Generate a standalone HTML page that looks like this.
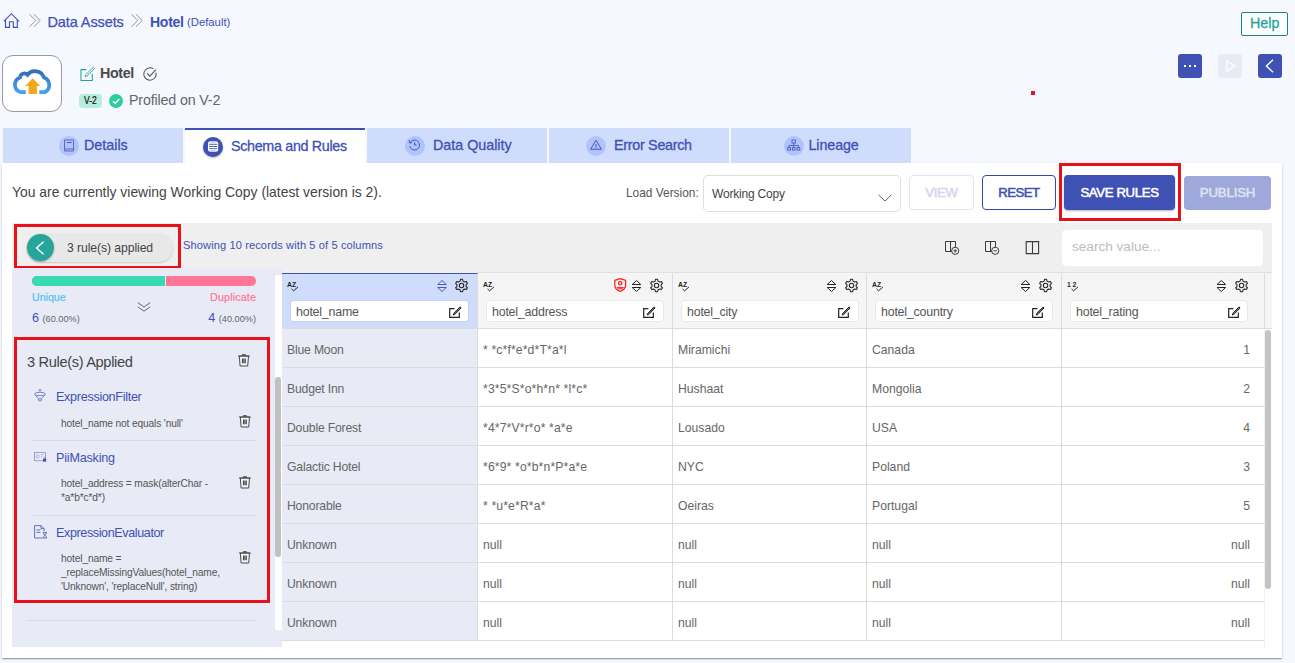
<!DOCTYPE html>
<html lang="en">
<head>
<meta charset="utf-8">
<title>Hotel - Schema and Rules</title>
<style>
*{box-sizing:border-box;margin:0;padding:0}
html,body{width:1295px;height:663px;overflow:hidden}
body{background:#f6f8ff;font-family:"Liberation Sans",Arial,sans-serif;color:#444;position:relative}
.abs{position:absolute}
.t{position:absolute;white-space:nowrap;line-height:1}
svg{position:absolute;overflow:visible}
/* breadcrumb */
.bc{color:#3f51b5;font-size:14.5px;top:15px}
/* tabs */
.tab{position:absolute;z-index:2;top:128px;height:35px;width:180px;background:#d0dcfc}
.tab.on{background:#fff;border-top:2px solid #3f51b5}
.tab .ic{position:absolute;top:8px;width:20px;height:20px;border-radius:50%;background:#b0c3fb}
.tab.on .ic{background:#3f51b5;top:7px;box-shadow:0 1px 2px rgba(0,0,0,.3)}
.tab .lb{position:absolute;top:10px;font-size:14.3px;color:#3f51b5;white-space:nowrap;line-height:1;-webkit-text-stroke:.3px #3f51b5}
.tab.on .lb{top:9px}
/* card */
#card{left:2px;top:163px;width:1280px;height:495px;background:#fff;box-shadow:0 2px 1px -1px rgba(0,0,0,.2),0 1px 1px 0 rgba(0,0,0,.14),0 1px 3px 0 rgba(0,0,0,.12)}
.btn{position:absolute;top:175px;height:35px;border-radius:4px;font-size:13.2px;font-weight:normal;-webkit-text-stroke:.55px currentColor;text-align:center;line-height:33px;white-space:nowrap}
/* table */
.th{position:absolute;top:273px;height:56px;background:#f5f5f5;border-top:1px solid transparent;border-right:1px solid #dcdcdc;border-bottom:1px solid #dcdcdc}
.th.sel{background:#d0dcfc;border-top:1px solid #3f51b5}
.th .inp{position:absolute;left:8.7px;top:27.2px;height:20px;background:#fff;border-radius:2.5px;box-shadow:0 0 0 .6px rgba(0,0,0,.09)}
.th .nm{position:absolute;left:14px;top:32px;letter-spacing:-.2px;font-size:12.4px;color:#555;line-height:1;white-space:nowrap}
.cell{position:absolute;height:39px;border-right:1px solid #dcdcdc;border-bottom:1px solid #dcdcdc;font-size:12.2px;color:#666;line-height:43px;padding:0 5px;white-space:nowrap;background:#fff}
.cell.c0{background:#e8eaf6}
.cell.r{text-align:right;padding-right:14px}
/* left panel */
.rn{color:#3f51b5;font-size:12.6px}
.rd{color:#555;font-size:10.2px;letter-spacing:-.14px}
</style>
</head>
<body>
<!-- breadcrumb -->
<svg style="left:3px;top:13px" width="17" height="16" viewBox="0 0 17 16" fill="none" stroke="#3f51b5" stroke-width="1.15" stroke-linejoin="miter" stroke-linecap="butt"><path d="M.8 8.3 L8.4 .7 L16 8.3"/><path d="M2.5 7 V14.4 H6.5 V8.7 H10.3 V14.4 H14.3 V7"/></svg>
<svg style="left:29px;top:14px" width="12" height="13" viewBox="0 0 12 13" fill="none" stroke="#9a9a9a" stroke-width="1"><path d="M.5 .4 L6.8 6.5 L.5 12.6"/><path d="M5 .4 L11.3 6.5 L5 12.6"/></svg>
<span class="t bc" id="bc1" style="left:47.5px;letter-spacing:-.1px;-webkit-text-stroke:.25px #3f51b5">Data Assets</span>
<svg style="left:131px;top:14px" width="12" height="13" viewBox="0 0 12 13" fill="none" stroke="#9a9a9a" stroke-width="1"><path d="M.5 .4 L6.8 6.5 L.5 12.6"/><path d="M5 .4 L11.3 6.5 L5 12.6"/></svg>
<span class="t bc" id="bc2" style="left:150px;font-weight:bold;font-size:14px;letter-spacing:-.25px">Hotel</span>
<span class="t" id="bc3" style="left:187px;top:17px;font-size:11.3px;color:#3f51b5">(Default)</span>

<!-- help -->
<div class="abs" style="left:1241px;top:12px;width:47px;height:24px;border:1px solid #16897b;border-radius:2px;background:#fff"></div>
<span class="t" id="help" style="left:1250px;top:16px;font-size:14.3px;color:#26a69a;-webkit-text-stroke:.3px #26a69a">Help</span>

<!-- logo -->
<div class="abs" style="left:2px;top:55px;width:60px;height:57px;border:1px solid #9a9a9a;border-radius:11px;background:#fff"></div>
<svg style="left:0px;top:50px" width="70" height="68" viewBox="0 0 682 663" fill="none">
<linearGradient id="cg" x1="0" y1="0" x2="0" y2="1"><stop offset="0" stop-color="#2f6fb6"/><stop offset=".45" stop-color="#3d87d6"/><stop offset="1" stop-color="#4a9fec"/></linearGradient>
<path d="M252 410 H198 A75 75 0 0 1 195 268 A42 42 0 0 1 268 243 A92 92 0 0 1 428 268 A78.5 78.5 0 0 1 440 410 H383" stroke="url(#cg)" stroke-width="36"/>
<path d="M318 275 L393 350 H360 V428 H278 V350 H245 Z" fill="#f5a81c"/>
</svg>

<!-- title -->
<svg style="left:80px;top:66px" width="16" height="16" viewBox="0 0 16 16" fill="none" stroke="#2a9d94" stroke-width="1.05" stroke-linejoin="miter"><path d="M6.4 3.6 H1 V14.4 H12.3 V7.8"/><path d="M5.6 8.9 L13.4 1.2 L14.7 2.5 L6.9 10.2 L5.2 10.6 Z" stroke-width=".9"/></svg>
<span class="t" id="ttl" style="left:100px;top:66px;font-size:14.3px;font-weight:bold;color:#4a4a4a;letter-spacing:-.36px">Hotel</span>
<svg style="left:143px;top:67px" width="14" height="14" viewBox="0 0 14 14" fill="none" stroke="#555" stroke-width="1.05"><path d="M13 5.6 A6.2 6.2 0 1 1 10.4 1.9"/><path d="M4 6.4 L6.8 9.2 L13 2.6"/></svg>
<div class="abs" style="left:79px;top:94px;width:23px;height:14px;border-radius:4px;background:#b7ecdf"></div>
<span class="t" id="v2" style="left:84px;top:95.5px;font-size:10.4px;color:#111;display:inline-block;transform:scaleX(.82);transform-origin:left center;-webkit-text-stroke:.2px #111">V-2</span>
<svg style="left:109px;top:94px" width="14" height="14" viewBox="0 0 14 14"><circle cx="7" cy="7" r="7" fill="#2ccf9c"/><path d="M3.9 7.2 L6.2 9.4 L10.3 4.9" fill="none" stroke="#fff" stroke-width="1.5"/></svg>
<span class="t" id="prof" style="left:129px;top:93px;font-size:14.3px;color:#666;letter-spacing:-.17px">Profiled on V-2</span>

<!-- action buttons -->
<div class="abs" style="left:1178px;top:54px;width:24px;height:24px;border-radius:3px;background:#3f51b5"></div>
<div class="abs" style="left:1184px;top:65px;width:2px;height:2px;background:#fff;box-shadow:5px 0 0 #fff,10px 0 0 #fff"></div>
<div class="abs" style="left:1218px;top:54px;width:24px;height:24px;border-radius:3px;background:#e8ebf3"></div>
<svg style="left:1226px;top:60px" width="10" height="12" viewBox="0 0 10 12" fill="none" stroke="#fff" stroke-width="1.2" stroke-linejoin="round"><path d="M.8 .8 L9 6 L.8 11.2 Z"/></svg>
<div class="abs" style="left:1258px;top:54px;width:24px;height:24px;border-radius:3px;background:#3f51b5"></div>
<svg style="left:1265px;top:59px" width="9" height="14" viewBox="0 0 9 14" fill="none" stroke="#fff" stroke-width="1.4"><path d="M8 .8 L1.4 7 L8 13.2"/></svg>
<div class="abs" style="left:1031px;top:91px;width:4px;height:4px;background:#e8121e"></div>

<!-- tabs -->
<div class="tab" style="left:3px"><div class="ic" style="left:56px"></div><span class="lb" id="tb1" style="left:81px">Details</span>
<svg style="left:61px;top:11px" width="10" height="13" viewBox="0 0 10 13" fill="none" stroke="#4656b8" stroke-width="1"><path d="M.5 1 H9.5 V12 H.5 Z" stroke="#5a69c4"/><path d="M.5 10 H9.5" stroke="#5a69c4"/><path d="M3 3.5 H7.6"/></svg></div>
<div class="tab on" style="left:185px"><div class="ic" style="left:18px"></div><span class="lb" id="tb2" style="left:46px;letter-spacing:-.31px">Schema and Rules</span>
<svg style="left:23px;top:11px" width="10" height="11" viewBox="0 0 10 11" fill="#fff" stroke="none"><rect x="0" y=".3" width="10.2" height="10.4" rx="2.6" ry="2"/><path d="M1 3.3 H9.2 M1 5.5 H9.2 M1 7.7 H9.2" stroke="#3f51b5" stroke-width=".9"/><path d="M2.6 1.3 H7.6 M2.6 9.8 H7.6" stroke="#9aa5e0" stroke-width=".6"/></svg></div>
<div class="tab" style="left:367px"><div class="ic" style="left:38px"></div><span class="lb" id="tb3" style="left:66px">Data Quality</span>
<svg style="left:41px;top:11px" width="13" height="12" viewBox="0 0 13 12" fill="none" stroke="#4656b8" stroke-width="1"><path d="M2.4 3.2 A5 5 0 1 1 1.7 7.2"/><path d="M1.3 1.2 V3.8 H3.9"/><path d="M6.6 3.2 V6 H8.6"/></svg></div>
<div class="tab" style="left:549px"><div class="ic" style="left:37px"></div><span class="lb" id="tb4" style="left:65px;letter-spacing:-.27px">Error Search</span>
<svg style="left:41px;top:11px" width="12" height="11" viewBox="0 0 12 11" fill="none" stroke="#4656b8" stroke-width="1" stroke-linejoin="miter"><path d="M6 1.2 L11.4 10.2 H.6 Z"/><path d="M6 5 V8.4" stroke-width="1.1"/></svg></div>
<div class="tab" style="left:731px"><div class="ic" style="left:53px"></div><span class="lb" id="tb5" style="left:77.5px;letter-spacing:-.1px">Lineage</span>
<svg style="left:56px;top:11px" width="14" height="12" viewBox="0 0 14 12" fill="none" stroke="#4656b8" stroke-width=".85"><rect x="5" y="1" width="3.4" height="3"/><path d="M6.7 4 V6.5 M2 9 V6.5 H11.4 V9 M6.7 6.5 V9"/><rect x=".6" y="8.6" width="2.8" height="2.4"/><rect x="5.3" y="8.6" width="2.8" height="2.4"/><rect x="10" y="8.6" width="2.8" height="2.4"/></svg></div>

<!-- card -->
<div class="abs" id="card"></div>
<span class="t" id="viewing" style="left:12px;top:186px;font-size:13.9px;color:#444">You are currently viewing Working Copy (latest version is 2).</span>
<span class="t" id="loadv" style="left:626px;top:188px;font-size:11.9px;color:#555">Load Version:</span>
<div class="abs" style="left:703px;top:175px;width:198px;height:37px;border:1px solid #dedede;border-radius:5px;background:#fff"></div>
<span class="t" id="wc" style="left:712px;top:188px;font-size:12px;color:#444;letter-spacing:-.2px">Working Copy</span>
<svg style="left:878px;top:194px" width="14" height="8" viewBox="0 0 14 8" fill="none" stroke="#666" stroke-width="1"><path d="M.6 .8 L7 7 L13.4 .8"/></svg>
<div class="btn" style="left:909px;width:65px;border:1px solid #e1e4f5;color:#d3d7ef;background:#fff;letter-spacing:-.36px">VIEW</div>
<div class="btn" style="left:982px;width:74px;border:1px solid #3548ab;color:#3f51b5;background:#fff;letter-spacing:-.54px">RESET</div>
<div class="btn" style="left:1064px;width:111px;background:#3f51b5;color:#fff;line-height:35px;box-shadow:0 1px 2px rgba(0,0,0,.3);letter-spacing:-.37px">SAVE RULES</div>
<div class="btn" style="left:1184px;width:87px;top:176px;height:34px;background:#9fa8da;color:#dfe2f4;line-height:33px;letter-spacing:-.15px">PUBLISH</div>
<div class="abs" style="left:1059px;top:163px;width:122px;height:58px;border:3px solid #ea1019"></div>

<!-- toolbar -->
<div class="abs" style="left:12px;top:223px;width:1260px;height:50px;background:#efefef"></div>
<div class="abs" style="left:27px;top:233px;width:146px;height:29px;border-radius:15px;background:#e8e8e8;box-shadow:0 1px 2px rgba(0,0,0,.16)"></div>
<div class="abs" style="left:27px;top:234px;width:27px;height:27px;border-radius:50%;background:#26a69a;box-shadow:0 1px 2px rgba(0,0,0,.3)"></div>
<svg style="left:35px;top:241px" width="10" height="14" viewBox="0 0 10 14" fill="none" stroke="#fff" stroke-width="1.5"><path d="M8.6 .8 L1.6 7 L8.6 13.2"/></svg>
<span class="t" id="pill" style="left:67px;top:242px;font-size:12.2px;color:#444;letter-spacing:-.08px">3 rule(s) applied</span>
<div class="abs" style="left:14px;top:224px;width:167px;height:45px;border:3px solid #ea1019"></div>
<span class="t" id="showing" style="left:183px;top:240px;font-size:11.1px;color:#3f51b5;letter-spacing:.1px">Showing 10 records with 5 of 5 columns</span>
<svg style="left:944px;top:240px" width="16" height="16" viewBox="0 0 16 16" fill="none" stroke="#3a3a3a" stroke-width="1"><path d="M1.5 1.5 H11.5 V11.5 H1.5 Z M6.5 1.5 V11.5"/><circle cx="11.2" cy="10.8" r="3.6" fill="#efefef" stroke-width="1"/><path d="M11.2 9 V12.6 M9.4 10.8 H13" stroke-width=".9"/></svg>
<svg style="left:984px;top:240px" width="16" height="16" viewBox="0 0 16 16" fill="none" stroke="#3a3a3a" stroke-width="1"><path d="M1.5 1.5 H11.5 V11.5 H1.5 Z M6.5 1.5 V11.5"/><circle cx="11.2" cy="10.8" r="3.6" fill="#efefef" stroke-width="1"/><path d="M9.4 10.8 H13" stroke-width=".9"/></svg>
<svg style="left:1025px;top:240px" width="15" height="15" viewBox="0 0 15 15" fill="none" stroke="#3a3a3a" stroke-width="1.1"><path d="M1.2 1.6 H13.6 V13.6 H1.2 Z M7.5 1.6 V13.6"/></svg>
<div class="abs" style="left:1062px;top:230px;width:201px;height:36px;background:#fff;border-radius:4px"></div>
<span class="t" id="srch" style="left:1072px;top:240px;font-size:13.6px;color:#bdbdbd">search value...</span>

<!-- left panel -->
<div class="abs" style="left:12px;top:268px;width:270px;height:379px;background:#e8eaf6"></div>
<div class="abs" style="left:275px;top:275px;width:7px;height:355px;background:#fff"></div>
<div class="abs" style="left:275px;top:377px;width:6px;height:180px;border-radius:3px;background:#c1c1c1"></div>
<div class="abs" style="left:32px;top:276px;width:224px;height:10px;border-radius:5px;background:#ff7597;overflow:hidden"><div style="width:134px;height:10px;background:#38dbb0;border-right:1px solid #e8eaf6"></div></div>
<span class="t" id="uniq" style="left:32px;top:292px;font-size:10.6px;color:#4fc3f7;-webkit-text-stroke:.2px #4fc3f7">Unique</span>
<span class="t" id="dup" style="right:1039px;top:292px;font-size:10.8px;color:#ff7597;letter-spacing:.1px;-webkit-text-stroke:.2px #ff7597">Duplicate</span>
<span class="t" id="u6" style="left:32px;top:312px;font-size:12.6px;color:#3f51b5">6 <span style="font-size:9.2px;color:#666">(60.00%)</span></span>
<span class="t" id="d4" style="right:1039px;top:312px;font-size:12.6px;color:#3f51b5">4 <span style="font-size:9.2px;color:#666">(40.00%)</span></span>
<svg style="left:137px;top:302px" width="14" height="10" viewBox="0 0 14 10" fill="none" stroke="#666" stroke-width="1"><path d="M.8 .6 L7 5 L13.2 .6"/><path d="M.8 4.8 L7 9.2 L13.2 4.8"/></svg>

<div class="abs" style="left:14px;top:337px;width:256px;height:266px;border:3px solid #ea1019"></div>
<span class="t" id="rapp" style="left:27px;top:355px;font-size:14.6px;color:#444;letter-spacing:-.33px">3 Rule(s) Applied</span>
<svg style="left:238px;top:354px" width="12" height="13" viewBox="0 0 12 13" fill="none" stroke="#4a4a4a" stroke-width="1"><path d="M1.3 2 L2.1 12 H9.7 L10.5 2 Z" fill="#f3f3fb"/><path d="M0 2 H11.8"/><path d="M4 .9 H7.8" stroke-width="1.4"/><path d="M4.5 4.6 V9.2 M5.9 4.6 V9.2 M7.3 4.6 V9.2" stroke-width="1.1"/></svg>

<!-- rule 1 -->
<svg style="left:34px;top:389px" width="12" height="13" viewBox="0 0 12 13" fill="none" stroke="#6b7acb" stroke-width=".9"><circle cx="6" cy="1.3" r=".9"/><ellipse cx="6" cy="5" rx="5.4" ry="1.7"/><path d="M.7 5.4 L4.6 9.6 V11.6 Q6 12.8 7.4 11.6 V9.6 L11.3 5.4"/><path d="M4.6 9.8 H7.4"/></svg>
<span class="t rn" id="r1" style="left:56px;top:391px;letter-spacing:-.3px">ExpressionFilter</span>
<span class="t rd" id="r1d" style="left:61px;top:418.5px">hotel_name not equals 'null'</span>
<svg style="left:239px;top:415px" width="12" height="13" viewBox="0 0 12 13" fill="none" stroke="#4a4a4a" stroke-width="1"><path d="M1.3 2 L2.1 12 H9.7 L10.5 2 Z" fill="#f3f3fb"/><path d="M0 2 H11.8"/><path d="M4 .9 H7.8" stroke-width="1.4"/><path d="M4.5 4.6 V9.2 M5.9 4.6 V9.2 M7.3 4.6 V9.2" stroke-width="1.1"/></svg>
<div class="abs" style="left:32px;top:440px;width:224px;height:1px;background:#d9dbe6"></div>
<!-- rule 2 -->
<svg style="left:34px;top:452px" width="13" height="10" viewBox="0 0 13 10" fill="none" stroke="#8f9ad8" stroke-width=".9"><rect x=".5" y=".5" width="11" height="8.2"/><circle cx="3.6" cy="4.4" r="1.5" stroke-width=".7"/><path d="M7 2.6 H9.4 M7 4.4 H8.4" stroke-width=".7"/><rect x="9" y="6.8" width="3.2" height="2.8" fill="#3f51b5" stroke="none"/><path d="M9.8 6.8 V6 Q10.6 5.2 11.4 6 V6.8" stroke="#3f51b5" stroke-width=".7"/></svg>
<span class="t rn" id="r2" style="left:56px;top:452px;letter-spacing:-.2px">PiiMasking</span>
<span class="t rd" id="r2d" style="left:61px;top:479px;line-height:14px;top:477px;white-space:normal;width:170px">hotel_address = mask(alterChar - *a*b*c*d*)</span>
<svg style="left:239px;top:476px" width="12" height="13" viewBox="0 0 12 13" fill="none" stroke="#4a4a4a" stroke-width="1"><path d="M1.3 2 L2.1 12 H9.7 L10.5 2 Z" fill="#f3f3fb"/><path d="M0 2 H11.8"/><path d="M4 .9 H7.8" stroke-width="1.4"/><path d="M4.5 4.6 V9.2 M5.9 4.6 V9.2 M7.3 4.6 V9.2" stroke-width="1.1"/></svg>
<div class="abs" style="left:32px;top:515px;width:224px;height:1px;background:#d9dbe6"></div>
<!-- rule 3 -->
<svg style="left:34px;top:525px" width="14" height="14" viewBox="0 0 14 14" fill="none" stroke="#5565c0" stroke-width=".9"><path d="M8.6 13 H.6 V.6 H7 L10 3.6 V6"/><path d="M7 .6 V3.6 H10"/><path d="M2.4 5 H6.4 M2.4 7.4 H6.4"/><path d="M8.8 7.4 H13 M8.8 13 H13 M9.4 7.6 C9.4 10 12.4 10.4 12.4 12.8 M12.4 7.6 C12.4 10 9.4 10.4 9.4 12.8"/></svg>
<span class="t rn" id="r3" style="left:56px;top:527px;letter-spacing:-.4px">ExpressionEvaluator</span>
<span class="t rd" id="r3d" style="left:61px;top:552px;line-height:14px;white-space:normal;width:175px">hotel_name = _replaceMissingValues(hotel_name, 'Unknown', 'replaceNull', string)</span>
<svg style="left:239px;top:551px" width="12" height="13" viewBox="0 0 12 13" fill="none" stroke="#4a4a4a" stroke-width="1"><path d="M1.3 2 L2.1 12 H9.7 L10.5 2 Z" fill="#f3f3fb"/><path d="M0 2 H11.8"/><path d="M4 .9 H7.8" stroke-width="1.4"/><path d="M4.5 4.6 V9.2 M5.9 4.6 V9.2 M7.3 4.6 V9.2" stroke-width="1.1"/></svg>
<div class="abs" style="left:27px;top:620px;width:229px;height:1px;background:#d9dbe6"></div>

<!-- table -->
<div class="abs" style="left:1265px;top:273px;width:7px;height:56px;background:#f5f5f5;border-bottom:1px solid #dcdcdc"></div>
<div class="abs" style="left:478px;top:272px;width:794px;height:1px;background:#e0e0e0"></div>
<!--TBL-->
<div class="th sel" style="left:282px;width:196px"><svg style="left:9px;top:12px" width="8" height="6" viewBox="0 0 8 6" fill="none" stroke="#222" stroke-width="1"><path d="M.6 3 L2.6 4.8 L6.9 1"/></svg><span class="t" style="left:5px;top:8px;font-size:6.8px;font-weight:bold;color:#222">AZ</span><svg style="left:154px;top:5px" width="12" height="14" viewBox="0 0 12 14" fill="none" stroke="#4a5bc0" stroke-width="1" stroke-linejoin="miter"><g transform="translate(0.7,0)"><path d="M1 5.5 L5.3 1.5 L9.6 5.5 Z"/><path d="M1 8.5 L5.3 12.5 L9.6 8.5 Z"/></g></svg><svg style="left:173.2px;top:5px" width="13.1" height="13.1" viewBox="0 0 13.1 13.1" fill="none" stroke="#222" stroke-width="1.05" stroke-linejoin="round"><path d="M5.10 2.08 L5.50 0.34 L7.60 0.34 L8.00 2.08 L9.69 3.06 L11.40 2.53 L12.45 4.35 L11.15 5.57 L11.15 7.53 L12.45 8.75 L11.40 10.57 L9.69 10.04 L8.00 11.02 L7.60 12.76 L5.50 12.76 L5.10 11.02 L3.41 10.04 L1.70 10.57 L0.65 8.75 L1.95 7.53 L1.95 5.57 L0.65 4.35 L1.70 2.53 L3.41 3.06 Z"/><circle cx="6.55" cy="6.55" r="2.2"/></svg><div class="inp" style="width:177.4px"></div><span class="nm">hotel_name</span><svg style="left:166.7px;top:32px" width="13" height="12" viewBox="0 0 13 12" fill="none" stroke="#222" stroke-width="1.2" stroke-linejoin="miter"><path d="M5.4 2.7 H.7 V11.4 H10.3 V6.6"/><path d="M4.6 7.6 L11 .9 L12.1 1.9 L5.7 8.6 L4.3 9 Z" stroke-width="1" fill="#777"/></svg></div>
<div class="th" style="left:478px;width:195px"><svg style="left:9px;top:12px" width="8" height="6" viewBox="0 0 8 6" fill="none" stroke="#222" stroke-width="1"><path d="M.6 3 L2.6 4.8 L6.9 1"/></svg><span class="t" style="left:5px;top:8px;font-size:6.8px;font-weight:bold;color:#222">AZ</span><svg style="left:135.8px;top:4px" width="12.4" height="14" viewBox="0 0 12.4 14" fill="none" stroke="#ff1d1d" stroke-width="1.25" stroke-linejoin="round"><path d="M6.2 .7 L11.6 2.3 V7 C11.6 10 9.4 12.2 6.2 13.3 C3 12.2 .8 10 .8 7 V2.3 Z"/><circle cx="6.2" cy="5.3" r="1.7"/><path d="M2.6 9.6 H9.8" stroke-width="1"/><path d="M3.4 11.2 Q6.2 9.6 9 11.2" stroke-width="1"/></svg><svg style="left:153px;top:5px" width="12" height="14" viewBox="0 0 12 14" fill="none" stroke="#222" stroke-width="1" stroke-linejoin="miter"><g transform="translate(0.2,0)"><path d="M1 5.5 L5.3 1.5 L9.6 5.5 Z"/><path d="M1 8.5 L5.3 12.5 L9.6 8.5 Z"/></g></svg><svg style="left:172px;top:5px" width="13.1" height="13.1" viewBox="0 0 13.1 13.1" fill="none" stroke="#222" stroke-width="1.05" stroke-linejoin="round"><path d="M5.10 2.08 L5.50 0.34 L7.60 0.34 L8.00 2.08 L9.69 3.06 L11.40 2.53 L12.45 4.35 L11.15 5.57 L11.15 7.53 L12.45 8.75 L11.40 10.57 L9.69 10.04 L8.00 11.02 L7.60 12.76 L5.50 12.76 L5.10 11.02 L3.41 10.04 L1.70 10.57 L0.65 8.75 L1.95 7.53 L1.95 5.57 L0.65 4.35 L1.70 2.53 L3.41 3.06 Z"/><circle cx="6.55" cy="6.55" r="2.2"/></svg><div class="inp" style="width:176.6px"></div><span class="nm">hotel_address</span><svg style="left:165.3px;top:32px" width="13" height="12" viewBox="0 0 13 12" fill="none" stroke="#222" stroke-width="1.2" stroke-linejoin="miter"><path d="M5.4 2.7 H.7 V11.4 H10.3 V6.6"/><path d="M4.6 7.6 L11 .9 L12.1 1.9 L5.7 8.6 L4.3 9 Z" stroke-width="1" fill="#777"/></svg></div>
<div class="th" style="left:673px;width:194px"><svg style="left:9px;top:12px" width="8" height="6" viewBox="0 0 8 6" fill="none" stroke="#222" stroke-width="1"><path d="M.6 3 L2.6 4.8 L6.9 1"/></svg><span class="t" style="left:5px;top:8px;font-size:6.8px;font-weight:bold;color:#222">AZ</span><svg style="left:153px;top:5px" width="12" height="14" viewBox="0 0 12 14" fill="none" stroke="#222" stroke-width="1" stroke-linejoin="miter"><g transform="translate(0.2,0)"><path d="M1 5.5 L5.3 1.5 L9.6 5.5 Z"/><path d="M1 8.5 L5.3 12.5 L9.6 8.5 Z"/></g></svg><svg style="left:172px;top:5px" width="13.1" height="13.1" viewBox="0 0 13.1 13.1" fill="none" stroke="#222" stroke-width="1.05" stroke-linejoin="round"><path d="M5.10 2.08 L5.50 0.34 L7.60 0.34 L8.00 2.08 L9.69 3.06 L11.40 2.53 L12.45 4.35 L11.15 5.57 L11.15 7.53 L12.45 8.75 L11.40 10.57 L9.69 10.04 L8.00 11.02 L7.60 12.76 L5.50 12.76 L5.10 11.02 L3.41 10.04 L1.70 10.57 L0.65 8.75 L1.95 7.53 L1.95 5.57 L0.65 4.35 L1.70 2.53 L3.41 3.06 Z"/><circle cx="6.55" cy="6.55" r="2.2"/></svg><div class="inp" style="width:176.6px"></div><span class="nm">hotel_city</span><svg style="left:165.3px;top:32px" width="13" height="12" viewBox="0 0 13 12" fill="none" stroke="#222" stroke-width="1.2" stroke-linejoin="miter"><path d="M5.4 2.7 H.7 V11.4 H10.3 V6.6"/><path d="M4.6 7.6 L11 .9 L12.1 1.9 L5.7 8.6 L4.3 9 Z" stroke-width="1" fill="#777"/></svg></div>
<div class="th" style="left:867px;width:195px"><svg style="left:9px;top:12px" width="8" height="6" viewBox="0 0 8 6" fill="none" stroke="#222" stroke-width="1"><path d="M.6 3 L2.6 4.8 L6.9 1"/></svg><span class="t" style="left:5px;top:8px;font-size:6.8px;font-weight:bold;color:#222">AZ</span><svg style="left:153px;top:5px" width="12" height="14" viewBox="0 0 12 14" fill="none" stroke="#222" stroke-width="1" stroke-linejoin="miter"><g transform="translate(0.2,0)"><path d="M1 5.5 L5.3 1.5 L9.6 5.5 Z"/><path d="M1 8.5 L5.3 12.5 L9.6 8.5 Z"/></g></svg><svg style="left:172px;top:5px" width="13.1" height="13.1" viewBox="0 0 13.1 13.1" fill="none" stroke="#222" stroke-width="1.05" stroke-linejoin="round"><path d="M5.10 2.08 L5.50 0.34 L7.60 0.34 L8.00 2.08 L9.69 3.06 L11.40 2.53 L12.45 4.35 L11.15 5.57 L11.15 7.53 L12.45 8.75 L11.40 10.57 L9.69 10.04 L8.00 11.02 L7.60 12.76 L5.50 12.76 L5.10 11.02 L3.41 10.04 L1.70 10.57 L0.65 8.75 L1.95 7.53 L1.95 5.57 L0.65 4.35 L1.70 2.53 L3.41 3.06 Z"/><circle cx="6.55" cy="6.55" r="2.2"/></svg><div class="inp" style="width:176.6px"></div><span class="nm">hotel_country</span><svg style="left:165.3px;top:32px" width="13" height="12" viewBox="0 0 13 12" fill="none" stroke="#222" stroke-width="1.2" stroke-linejoin="miter"><path d="M5.4 2.7 H.7 V11.4 H10.3 V6.6"/><path d="M4.6 7.6 L11 .9 L12.1 1.9 L5.7 8.6 L4.3 9 Z" stroke-width="1" fill="#777"/></svg></div>
<div class="th" style="left:1062px;width:203px"><svg style="left:9px;top:12px" width="8" height="6" viewBox="0 0 8 6" fill="none" stroke="#222" stroke-width="1"><path d="M.6 3 L2.6 4.8 L6.9 1"/></svg><span class="t" style="left:5px;top:8px;font-size:6.8px;font-weight:bold;color:#222;letter-spacing:1.6px">12</span><svg style="left:154px;top:5px" width="12" height="14" viewBox="0 0 12 14" fill="none" stroke="#222" stroke-width="1" stroke-linejoin="miter"><g transform="translate(0.0,0)"><path d="M1 5.5 L5.3 1.5 L9.6 5.5 Z"/><path d="M1 8.5 L5.3 12.5 L9.6 8.5 Z"/></g></svg><svg style="left:172.6px;top:5px" width="13.1" height="13.1" viewBox="0 0 13.1 13.1" fill="none" stroke="#222" stroke-width="1.05" stroke-linejoin="round"><path d="M5.10 2.08 L5.50 0.34 L7.60 0.34 L8.00 2.08 L9.69 3.06 L11.40 2.53 L12.45 4.35 L11.15 5.57 L11.15 7.53 L12.45 8.75 L11.40 10.57 L9.69 10.04 L8.00 11.02 L7.60 12.76 L5.50 12.76 L5.10 11.02 L3.41 10.04 L1.70 10.57 L0.65 8.75 L1.95 7.53 L1.95 5.57 L0.65 4.35 L1.70 2.53 L3.41 3.06 Z"/><circle cx="6.55" cy="6.55" r="2.2"/></svg><div class="inp" style="width:176.7px"></div><span class="nm">hotel_rating</span><svg style="left:165.7px;top:32px" width="13" height="12" viewBox="0 0 13 12" fill="none" stroke="#222" stroke-width="1.2" stroke-linejoin="miter"><path d="M5.4 2.7 H.7 V11.4 H10.3 V6.6"/><path d="M4.6 7.6 L11 .9 L12.1 1.9 L5.7 8.6 L4.3 9 Z" stroke-width="1" fill="#777"/></svg></div>
<div class="cell c0" style="left:282px;top:329px;width:196px;letter-spacing:-.18px">Blue Moon</div>
<div class="cell" style="left:478px;top:329px;width:195px;letter-spacing:.14px">* *c*f*e*d*T*a*l</div>
<div class="cell" style="left:673px;top:329px;width:194px">Miramichi</div>
<div class="cell" style="left:867px;top:329px;width:195px">Canada</div>
<div class="cell r" style="left:1062px;top:329px;width:203px;border-right-color:#f1f1f1">1</div>
<div class="cell c0" style="left:282px;top:368px;width:196px;letter-spacing:-.18px">Budget Inn</div>
<div class="cell" style="left:478px;top:368px;width:195px;letter-spacing:.14px">*3*5*S*o*h*n* *l*c*</div>
<div class="cell" style="left:673px;top:368px;width:194px">Hushaat</div>
<div class="cell" style="left:867px;top:368px;width:195px">Mongolia</div>
<div class="cell r" style="left:1062px;top:368px;width:203px;border-right-color:#f1f1f1">2</div>
<div class="cell c0" style="left:282px;top:407px;width:196px;letter-spacing:-.18px">Double Forest</div>
<div class="cell" style="left:478px;top:407px;width:195px;letter-spacing:.14px">*4*7*V*r*o* *a*e</div>
<div class="cell" style="left:673px;top:407px;width:194px">Lousado</div>
<div class="cell" style="left:867px;top:407px;width:195px">USA</div>
<div class="cell r" style="left:1062px;top:407px;width:203px;border-right-color:#f1f1f1">4</div>
<div class="cell c0" style="left:282px;top:446px;width:196px;letter-spacing:-.18px">Galactic Hotel</div>
<div class="cell" style="left:478px;top:446px;width:195px;letter-spacing:.14px">*6*9* *o*b*n*P*a*e</div>
<div class="cell" style="left:673px;top:446px;width:194px">NYC</div>
<div class="cell" style="left:867px;top:446px;width:195px">Poland</div>
<div class="cell r" style="left:1062px;top:446px;width:203px;border-right-color:#f1f1f1">3</div>
<div class="cell c0" style="left:282px;top:485px;width:196px;letter-spacing:-.18px">Honorable</div>
<div class="cell" style="left:478px;top:485px;width:195px;letter-spacing:.14px">* *u*e*R*a*</div>
<div class="cell" style="left:673px;top:485px;width:194px">Oeiras</div>
<div class="cell" style="left:867px;top:485px;width:195px">Portugal</div>
<div class="cell r" style="left:1062px;top:485px;width:203px;border-right-color:#f1f1f1">5</div>
<div class="cell c0" style="left:282px;top:524px;width:196px;letter-spacing:-.18px">Unknown</div>
<div class="cell" style="left:478px;top:524px;width:195px">null</div>
<div class="cell" style="left:673px;top:524px;width:194px">null</div>
<div class="cell" style="left:867px;top:524px;width:195px">null</div>
<div class="cell r" style="left:1062px;top:524px;width:203px;border-right-color:#f1f1f1">null</div>
<div class="cell c0" style="left:282px;top:563px;width:196px;letter-spacing:-.18px">Unknown</div>
<div class="cell" style="left:478px;top:563px;width:195px">null</div>
<div class="cell" style="left:673px;top:563px;width:194px">null</div>
<div class="cell" style="left:867px;top:563px;width:195px">null</div>
<div class="cell r" style="left:1062px;top:563px;width:203px;border-right-color:#f1f1f1">null</div>
<div class="cell c0" style="left:282px;top:602px;width:196px;letter-spacing:-.18px">Unknown</div>
<div class="cell" style="left:478px;top:602px;width:195px">null</div>
<div class="cell" style="left:673px;top:602px;width:194px">null</div>
<div class="cell" style="left:867px;top:602px;width:195px">null</div>
<div class="cell r" style="left:1062px;top:602px;width:203px;border-right-color:#f1f1f1">null</div>
<!--/TBL-->
<div class="abs" style="left:1265px;top:330px;width:6px;height:259px;border-radius:3px;background:#c4c4c4"></div>
<div class="abs" style="left:1264px;top:641px;width:1px;height:7px;background:#f1f1f1"></div>
</body>
</html>
